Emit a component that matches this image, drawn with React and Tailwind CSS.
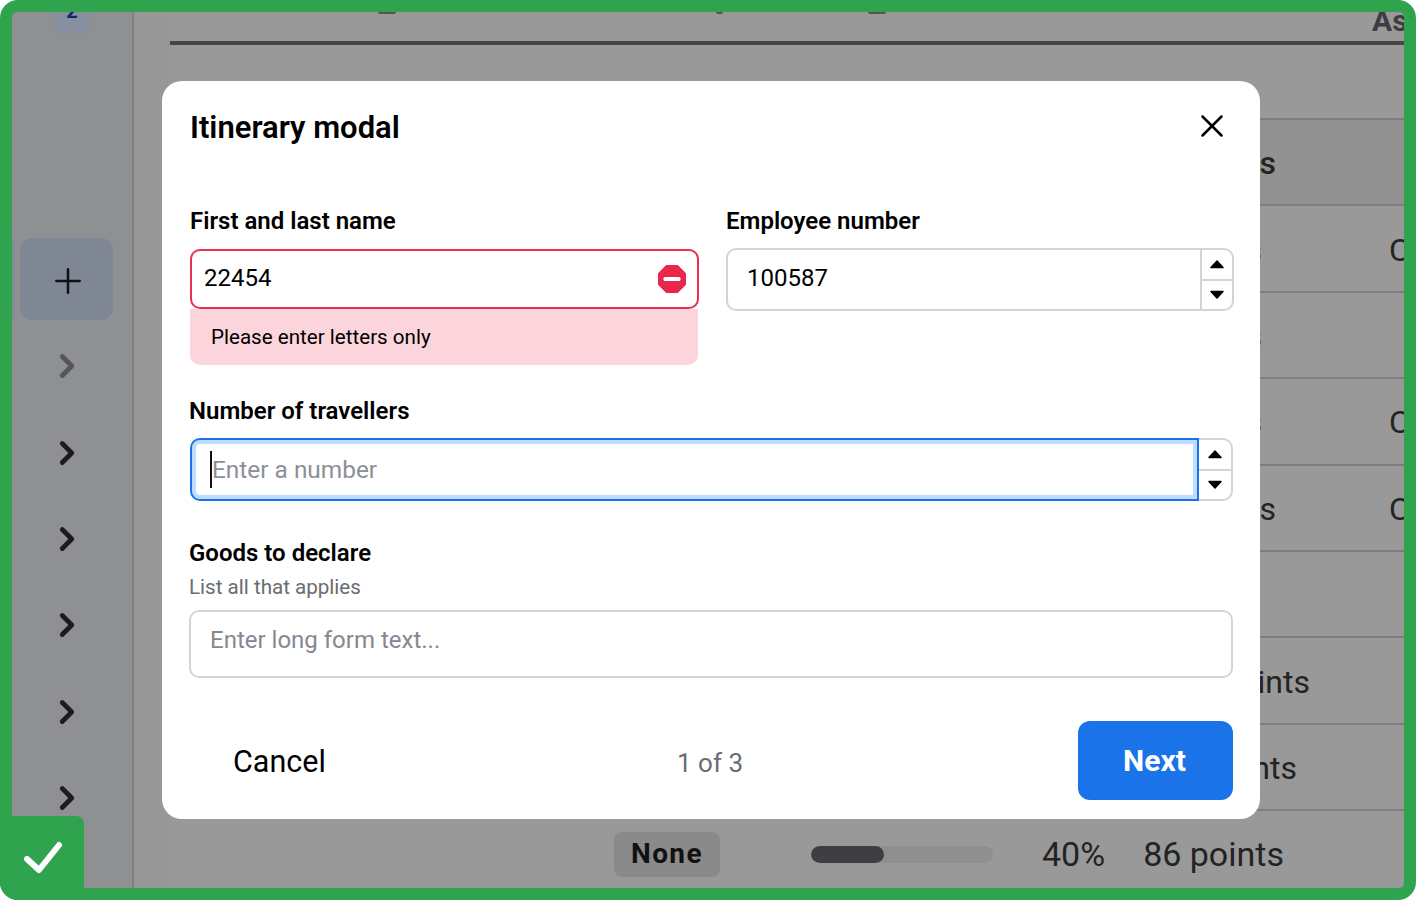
import { ChevronRight, Plus, X } from "lucide-react";

const rows = [
  { tail: "s", tailClass: "w-[1106px] font-medium", tone: "bg-[#919191]", corner: false },
  { tail: "s", tailClass: "w-[1092px]", tone: "", corner: true },
  { tail: "s", tailClass: "w-[1092px]", tone: "", corner: false },
  { tail: "s", tailClass: "w-[1092px]", tone: "", corner: true },
  { tail: "s", tailClass: "w-[1106px]", tone: "", corner: true },
  { tail: "", tailClass: "w-[1090px]", tone: "", corner: false },
  { tail: "ints", tailClass: "w-[1140px]", tone: "", corner: false },
  { tail: "nts", tailClass: "w-[1127px]", tone: "", corner: false },
];

function Sidebar() {
  return (
    <aside className="flex w-[120px] shrink-0 flex-col bg-[#8f9092]">
      <div className="ml-[42px] flex h-[21px] w-9 items-start justify-center overflow-hidden rounded-b-lg bg-[#87909e]">
        <span className="-mt-[11px] text-xl font-bold leading-none text-[#10296a]">2</span>
      </div>
      <div className="mt-[205px] flex h-[82px] gap-[5px]">
        <div className="h-full w-[3px] rounded-r-md bg-[#868c97]" />
        <div className="flex h-full w-[93px] items-center justify-center rounded-xl bg-[#7f8794] pl-[3px] pt-[4px]">
          <Plus className="text-[#111]" size={40} strokeWidth={1.5} />
        </div>
      </div>
      <div className="mt-[3px] flex flex-col">
        {[0, 1, 2, 3, 4, 5].map((i) => (
          <div className="flex h-[86.4px] items-center pl-[36px] text-[#1c1c1e] first:text-[#55565a]" key={i}>
            <ChevronRight size={38} strokeWidth={3} />
          </div>
        ))}
      </div>
    </aside>
  );
}

function BackgroundTable() {
  return (
    <main className="flex min-w-0 flex-1 flex-col overflow-hidden bg-[#999999] text-[32px] leading-none text-[#232323]">
      <div className="relative flex h-[29px] shrink-0">
        <span className="ml-[208px] h-[2px] w-5 rounded-b-full bg-[#555]" />
        <span className="ml-[320px] h-[2px] w-2 rounded-b-full bg-[#555]" />
        <span className="ml-[145px] h-[2px] w-5 rounded-b-full bg-[#555]" />
        <span className="ml-[486px] h-[20px] overflow-hidden text-[30px] font-bold leading-[18px] text-[#3d3d40]">As</span>
      </div>
      <div className="h-1 shrink-0 bg-[#464646]" />
      <div className="h-[73px] shrink-0" />
      {rows.map((row, i) => (
        <div className={`flex h-[86.4px] shrink-0 items-center border-t-2 border-[#7d7d85] pt-[2px] ${row.tone}`} key={i}>
          <span className={`shrink-0 text-right ${row.tailClass}`}>{row.tail}</span>
          {row.corner && <span className="ml-auto w-[15px] overflow-hidden">C</span>}
        </div>
      ))}
      <div className="flex h-[78px] shrink-0 items-center border-t-2 border-[#7d7d85] pl-[444px] pt-[10px]">
        <span className="flex h-[45px] w-[106px] items-center justify-center rounded-lg bg-[#8a8a8a] text-[28px] font-bold tracking-wider text-[#111]">
          None
        </span>
        <div className="ml-[91px] h-[17px] w-[182px] overflow-hidden rounded-full bg-[#8f8f8f]">
          <div className="h-full w-[40%] rounded-full bg-[#3e3f42]" />
        </div>
        <span className="ml-[49px] text-[34px]">40%</span>
        <span className="ml-[38px] text-[34px]">86 points</span>
      </div>
    </main>
  );
}

function Stepper({ className }) {
  return (
    <div className={`flex w-[34px] shrink-0 flex-col overflow-hidden border-2 border-[#d1d5db] bg-white ${className}`}>
      <div className="flex flex-1 items-center justify-center border-b-2 border-[#d1d5db]">
        <svg fill="#000" height="10" viewBox="0 0 16 10" width="16">
          <path d="M8 2 14 8.500H2Z" stroke="#000" strokeLinejoin="round" strokeWidth="1.500" />
        </svg>
      </div>
      <div className="flex flex-1 items-center justify-center">
        <svg fill="#000" height="10" viewBox="0 0 16 10" width="16">
          <path d="M2 1.500H14L8 8Z" stroke="#000" strokeLinejoin="round" strokeWidth="1.500" />
        </svg>
      </div>
    </div>
  );
}

function ErrorIcon() {
  return (
    <svg height="28" viewBox="0 0 28 28" width="28">
      <path d="M8.2 0h11.6L28 8.2v11.6L19.8 28H8.2L0 19.800V8.200Z" fill="#e8274b" />
      <rect fill="#fff" height="4" rx="1.500" width="17" x="5.500" y="12" />
    </svg>
  );
}

function Modal() {
  return (
    <section className="absolute left-[162px] top-[81px] flex h-[738px] w-[1098px] flex-col rounded-[20px] bg-white pl-[27px] pr-[27px] text-black">
      <div className="flex h-[91px] shrink-0 items-start justify-between">
        <h2 className="ml-px mt-[27px] text-[31px] font-semibold leading-[40px]">Itinerary modal</h2>
        <X className="mr-[2px] mt-[26px]" size={38} strokeWidth={1.6} />
      </div>

      <div className="-mr-px flex h-[193px] shrink-0 gap-[27px] pl-px">
        <div className="w-[509px]">
          <div className="mt-[34px] text-2xl font-semibold leading-[30px]">First and last name</div>
          <div className="mt-[13px] flex h-[60px] items-center justify-between rounded-[10px] border-2 border-[#e8304f] bg-white pl-3 pr-[11px] text-2xl">
            <span className="-mt-[2px]">22454</span>
            <ErrorIcon />
          </div>
          <div className="mr-px flex h-[56px] items-center rounded-b-[10px] bg-[#fcd5dc] pl-[21px] text-[20.6px]">Please enter letters only</div>
        </div>
        <div className="w-[508px]">
          <div className="mt-[34px] text-2xl font-semibold leading-[30px]">Employee number</div>
          <div className="mt-3 flex h-[63px]">
            <div className="flex flex-1 items-center rounded-l-[10px] border-2 border-r-0 border-[#d1d5db] pb-[4px] pl-[19px] text-2xl">100587</div>
            <Stepper className="rounded-r-[10px]" />
          </div>
        </div>
      </div>

      <div className="mt-[31px] text-2xl font-semibold leading-[30px]">Number of travellers</div>
      <div className="mt-3 flex h-[63px] pl-px">
        <div className="flex flex-1 items-center rounded-l-[10px] border-2 border-[#1a73e8] pl-[18px] text-[24.4px] text-[#8b9096] shadow-[inset_0_0_0_4px_#bfdbfe]">
          <span className="h-[37px] w-[2px] bg-[#111]" />
          <span className="mt-[2px]">Enter a number</span>
        </div>
        <Stepper className="rounded-r-[10px] border-l-0" />
      </div>

      <div className="mt-[37px] text-2xl font-semibold leading-[30px]">Goods to declare</div>
      <div className="mt-[5px] text-[20.6px] leading-[28px] text-[#686d73]">List all that applies</div>
      <div className="mt-[9px] flex h-[68px] items-start rounded-[10px] border-2 border-[#d1d5db] pl-[19px] pt-[13px] text-2xl leading-[30px] text-[#85898f]">
        Enter long form text...
      </div>

      <div className="mt-[43px] flex items-center">
        <span className="ml-[44px] mt-[3px] w-[444px] text-[30.5px] leading-none">Cancel</span>
        <span className="mt-[4px] text-[26px] leading-none text-[#686d73]">1 of 3</span>
        <span className="ml-auto flex h-[79px] w-[155px] items-center justify-center rounded-xl bg-[#1a73e8] pr-[2px] text-[30px] font-bold text-white">
          Next
        </span>
      </div>
    </section>
  );
}

export default function App() {
  return (
    <div className="relative h-[900px] w-[1416px] overflow-hidden rounded-[18px] bg-[#2fa34e] p-3 font-['Roboto',sans-serif]">
      <div className="flex h-[876px] overflow-hidden rounded-[5px]">
        <Sidebar />
        <div className="w-[2px] shrink-0 bg-[#808082]" />
        <div className="w-9 shrink-0 bg-[#979797]" />
        <BackgroundTable />
      </div>
      <Modal />
      <div className="absolute bottom-0 left-0 flex h-[84px] w-[84px] items-center justify-center rounded-tr-lg bg-[#2fa34e]">
        <svg className="translate-x-[2px]" fill="none" height="34" viewBox="0 0 42 34" width="42">
          <path d="M4 18 16 29 36 4" stroke="#fff" strokeLinecap="round" strokeLinejoin="round" strokeWidth="6" />
        </svg>
      </div>
    </div>
  );
}
